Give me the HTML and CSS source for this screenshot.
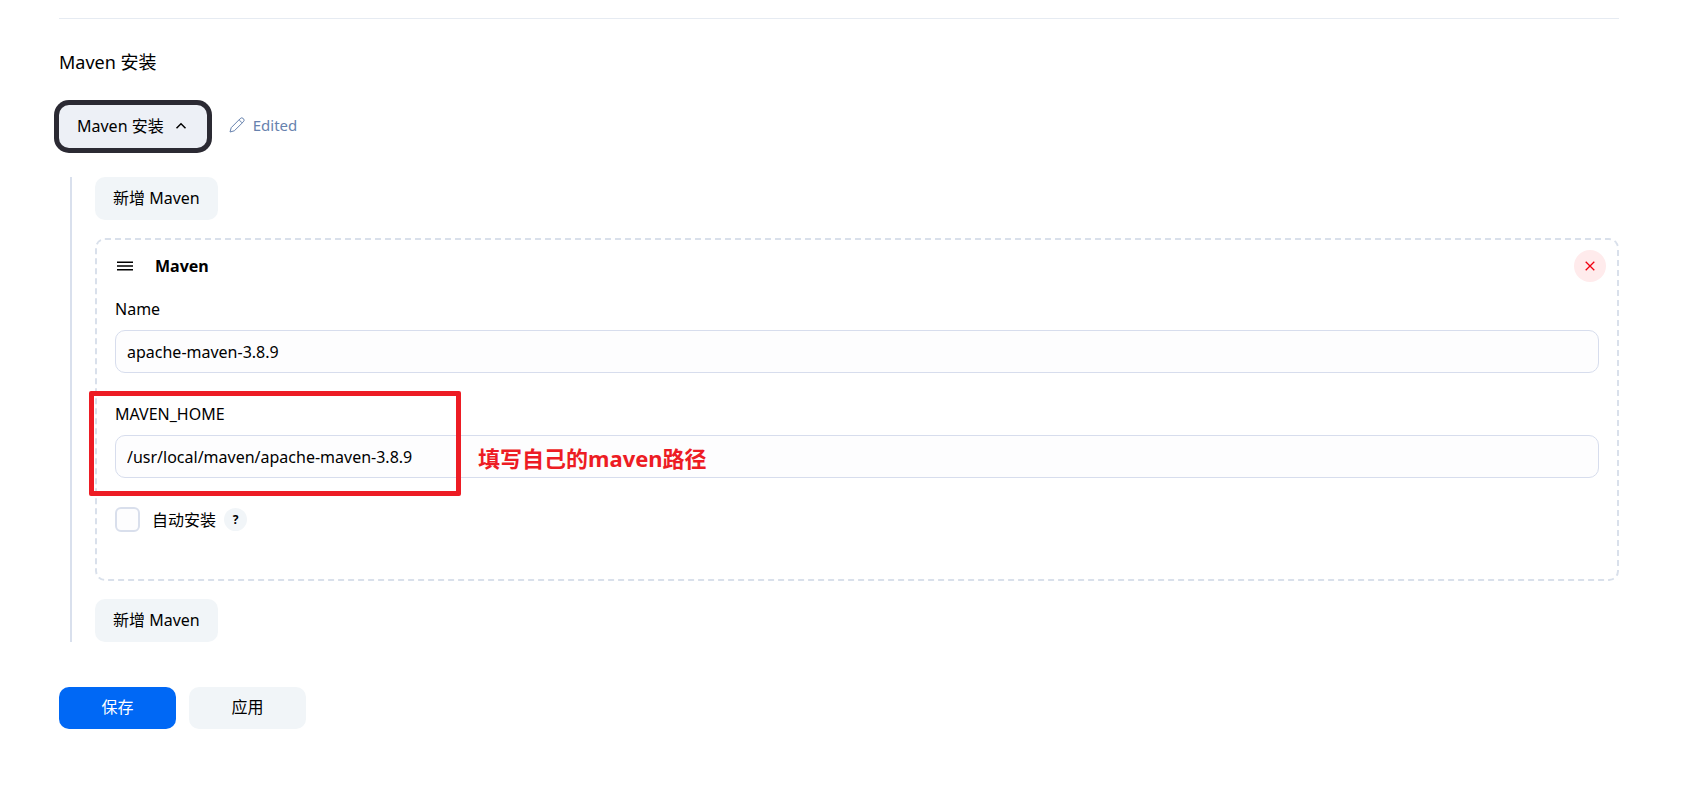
FILE: index.html
```html
<!DOCTYPE html>
<html lang="zh-CN">
<head>
<meta charset="utf-8">
<meta name="viewport" content="width=device-width, initial-scale=1">
<title>Maven 安装</title>
<link rel="stylesheet" href="styles.css">
</head>
<body>
<form class="page">
  <section class="section">
    <h2 class="section-title">Maven 安装</h2>
    <div class="toggle-row">
      <button type="button" class="button toggle" aria-expanded="true">
        Maven 安装
        <svg class="chevron" viewBox="0 0 12 12" aria-hidden="true"><path d="M1.500 8.200 6 3.800l4.500 4.400"/></svg>
      </button>
      <span class="edited">
        <svg class="pencil" viewBox="0 0 16 16" aria-hidden="true"><path d="M1 15l1.200-4.300L11.200 1.600a2.250 2.250 0 0 1 3.200 0 2.250 2.250 0 0 1 0 3.200L5.300 13.800zM10.500 2.300c.2 2 1.200 3 3.200 3.200"/></svg>
        Edited
      </span>
    </div>

    <div class="installations">
      <button type="button" class="button">新增 Maven</button>
      <div class="card">
        <div class="card-header">
          <svg class="drag" viewBox="0 0 16 10" aria-hidden="true"><path d="M0 1.250h16M0 5h16M0 8.750h16"/></svg>
          <h3 class="card-title">Maven</h3>
          <button type="button" class="remove" aria-label="删除">
            <svg viewBox="0 0 10 10" aria-hidden="true"><path d="M.7.7l8.600 8.600M9.300.7L.7 9.300"/></svg>
          </button>
        </div>
        <div class="field">
          <label class="label" for="name">Name</label>
          <input class="input" id="name" type="text" value="apache-maven-3.8.9">
        </div>
        <div class="field">
          <label class="label" for="home">MAVEN_HOME</label>
          <input class="input" id="home" type="text" value="/usr/local/maven/apache-maven-3.8.9">
          <span class="mark-box"></span>
          <span class="mark-text">填写自己的maven路径</span>
        </div>
        <div class="check-row">
          <input class="checkbox" id="auto" type="checkbox">
          <label for="auto">自动安装</label>
          <button type="button" class="help" aria-label="帮助">?</button>
        </div>
      </div>
      <button type="button" class="button">新增 Maven</button>
    </div>
  </section>

  <div class="actions">
    <button type="submit" class="button action primary">保存</button>
    <button type="button" class="button action">应用</button>
  </div>
</form>
</body>
</html>
```

FILE: styles.css
```css
* {
  box-sizing: border-box;
}

body {
  margin: 0;
  background: #fff;
  color: #000;
  font: 16px/24px "Noto Sans", "Noto Sans CJK SC", sans-serif;
}

button,
input {
  font: inherit;
  color: inherit;
  margin: 0;
}

svg {
  fill: none;
  stroke: currentColor;
}

.page {
  padding: 18px 84px 64px 59px;
}

.section {
  border-top: 1px solid #e6ebf2;
  padding-top: 31px;
}

.section-title {
  margin: 0;
  font-size: 18px;
  font-weight: 400;
  line-height: 24px;
}

.toggle-row {
  display: flex;
  align-items: center;
  gap: 22px;
  margin-top: 31px;
}

.button {
  height: 43px;
  padding: 0 18px 2px;
  border: 0;
  border-radius: 10px;
  background: #f1f5f8;
}

.toggle {
  display: flex;
  align-items: center;
  gap: 11px;
  padding-right: 20px;
  background: #edf0f6;
  box-shadow: 0 0 0 5px #2b2a33;
}

.chevron {
  width: 12px;
  height: 12px;
  stroke-width: 1.5;
}

.edited {
  display: flex;
  align-items: center;
  gap: 8px;
  padding-bottom: 3px;
  color: #6782ae;
  font-size: 15px;
}

.pencil {
  width: 16px;
  height: 16px;
  stroke-linejoin: round;
}

.installations {
  display: flex;
  flex-direction: column;
  align-items: flex-start;
  gap: 18px;
  margin: 29px 0 0 11px;
  padding-left: 23px;
  border-left: 2px solid #d9e0ed;
}

.card {
  align-self: stretch;
  padding: 10px 18px 47px;
  border: 2px dashed #d9e0eb;
  border-radius: 10px;
}

.card-header {
  display: flex;
  align-items: center;
  gap: 22px;
  margin: 0 -7px 0 2px;
}

.drag {
  width: 16px;
  height: 10px;
  stroke-width: 1.5;
}

.card-title {
  flex: 1;
  margin: 0;
  font-size: 16px;
  font-weight: 700;
}

.remove {
  display: grid;
  place-items: center;
  width: 32px;
  height: 32px;
  padding: 0;
  border: 0;
  border-radius: 50%;
  background: #ffebec;
  color: #f00010;
}

.remove svg {
  width: 10px;
  height: 10px;
  stroke-width: 1.3;
}

.field {
  position: relative;
  margin-top: 15px;
}

.field + .field {
  margin-top: 29px;
}

.label {
  display: block;
  margin-bottom: 9px;
}

.input {
  display: block;
  width: 100%;
  height: 43px;
  padding: 0 11px;
  border: 1px solid #d7dded;
  border-radius: 10px;
  background: #fdfdfe;
}

.mark-box {
  position: absolute;
  top: -11px;
  left: -26px;
  width: 372px;
  height: 105px;
  border: 5px solid #ed1c24;
  border-radius: 2px;
  pointer-events: none;
}

.mark-text {
  position: absolute;
  top: 44px;
  left: 363px;
  color: #ed1c24;
  font-size: 22px;
  font-weight: 700;
  line-height: 24px;
}

.check-row {
  display: flex;
  align-items: center;
  gap: 12px;
  margin-top: 29px;
}

.checkbox {
  appearance: none;
  width: 25px;
  height: 25px;
  border: 2px solid #d9dfec;
  border-radius: 6px;
  background: #fdfdfe;
}

.help {
  width: 23px;
  height: 23px;
  margin-left: -4px;
  padding: 0;
  border: 0;
  border-radius: 50%;
  background: #f1f5f8;
  font-size: 12px;
  font-weight: 700;
  line-height: 23px;
}

.actions {
  display: flex;
  gap: 13px;
  margin-top: 45px;
}

.action {
  width: 117px;
  height: 42px;
}

.primary {
  background: #0068f5;
  color: #fff;
}
```
